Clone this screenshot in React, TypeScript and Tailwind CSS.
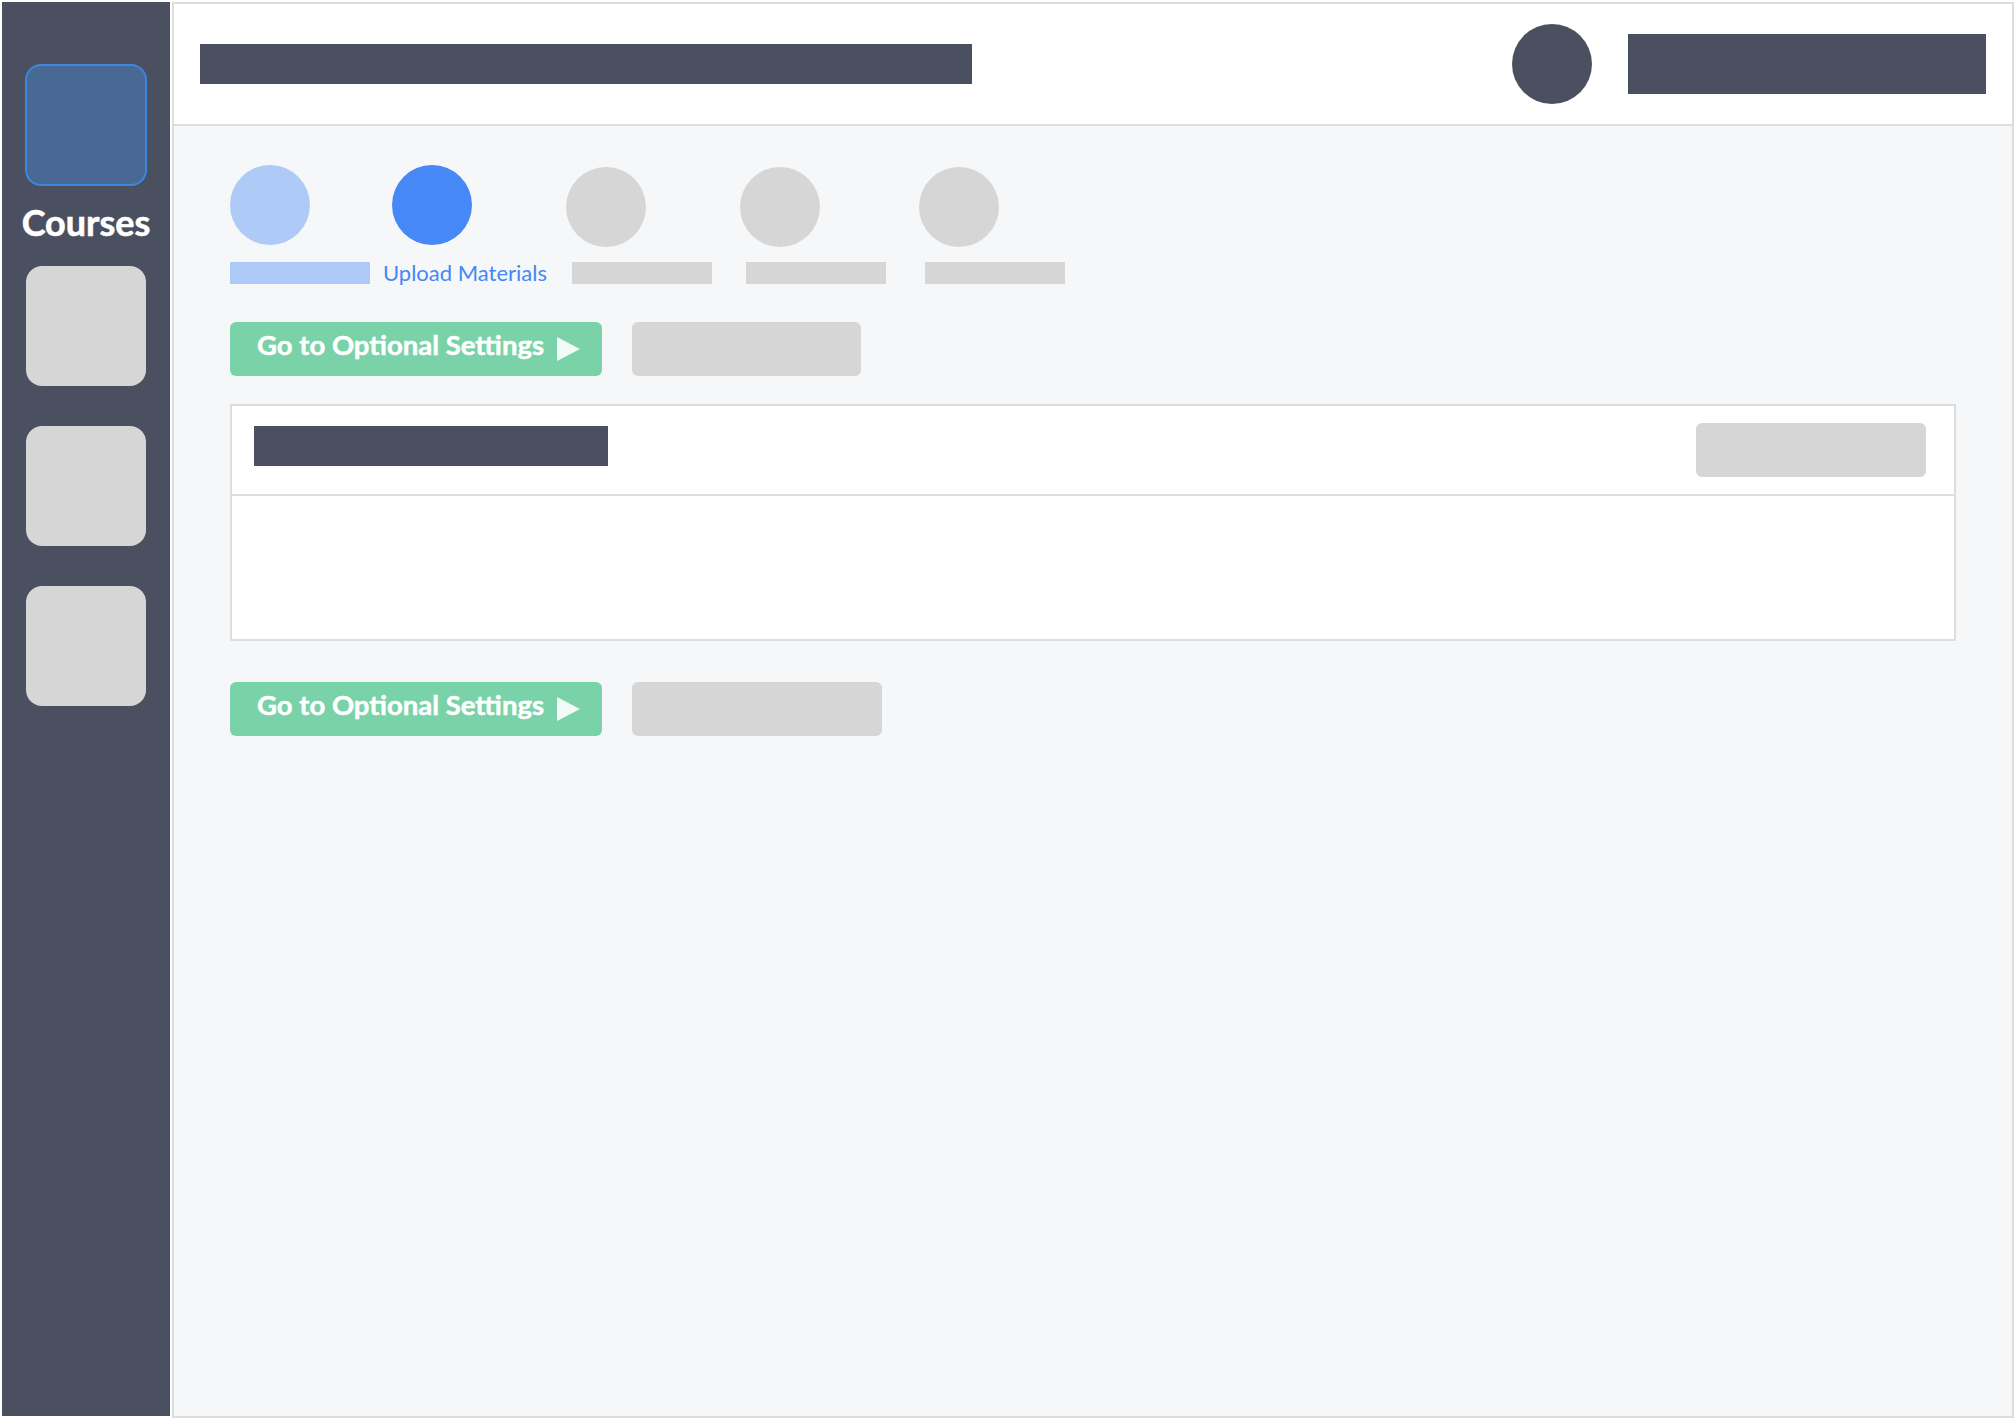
import React from 'react';

const steps = [
  { circle: 'bg-[#aecaf7]', label: 'bar-active', ml: 'ml-0' },
  { circle: 'bg-[#4588f6]', label: 'text', ml: 'ml-[13px]' },
  { circle: 'bg-[#d6d6d6]', label: 'bar', ml: 'ml-[19px]' },
  { circle: 'bg-[#d6d6d6]', label: 'bar', ml: 'ml-[28px]' },
  { circle: 'bg-[#d6d6d6]', label: 'bar', ml: 'ml-[33px]' },
];

function NextButton() {
  return (
    <button className="flex h-[54px] w-[372px] items-center rounded-[6px] bg-[#79d2a8] pb-2 pl-[27px] text-[27.5px] font-bold leading-[34px] text-white [-webkit-text-stroke:0.5px_#ffffff]">
      <span>Go to Optional Settings</span>
      <svg viewBox="0 0 24 24" className="ml-[12px] h-[24px] w-[24px] translate-y-[4px]">
        <path d="M1 0 L24 12 L1 24 Z" fill="#ffffff" fillOpacity="0.9" />
      </svg>
    </button>
  );
}

function Stepper() {
  return (
    <div className="flex items-start">
      {steps.map((step, i) => (
        <div key={i} className={`flex flex-col items-start ${step.ml}`}>
          {/* circle */}
          <div
            className={`h-[80px] w-[80px] rounded-full ${step.circle} ${
              step.label === 'text' ? 'ml-[9px]' : ''
            } ${step.label === 'bar' ? 'mt-[2px]' : ''}`}
          />
          {/* label */}
          {step.label === 'text' ? (
            <div className="mt-[17px] h-[22px] text-[22px] leading-[22px] text-[#4587f5]">Upload Materials</div>
          ) : (
            <div
              className={`h-[22px] w-[140px] ${
                step.label === 'bar-active' ? 'mt-[17px] bg-[#aecaf7]' : 'ml-[6px] mt-[15px] bg-[#d6d6d6]'
              }`}
            />
          )}
        </div>
      ))}
    </div>
  );
}

export default function App() {
  return (
    <div className="flex h-[1420px] w-full gap-[2px] bg-white p-[2px] font-[family-name:Lato,sans-serif]">
      {/* Sidebar */}
      <aside className="flex h-[1414px] w-[168px] shrink-0 flex-col items-center bg-[#4b5061] pt-[62px]">
        <div className="h-[122px] w-[122px] rounded-[16px] border-2 border-[#3f86e0] bg-[#486994]" />
        <div className="mt-[18px] text-[36px] font-bold leading-[36px] text-white [-webkit-text-stroke:0.6px_#ffffff]">
          Courses
        </div>
        <div className="mt-[26px] h-[120px] w-[120px] rounded-[16px] bg-[#d6d6d6]" />
        <div className="mt-[40px] h-[120px] w-[120px] rounded-[16px] bg-[#d6d6d6]" />
        <div className="mt-[40px] h-[120px] w-[120px] rounded-[16px] bg-[#d6d6d6]" />
      </aside>

      {/* Main */}
      <main className="flex flex-1 flex-col border-2 border-[#dddddd] bg-[#f6f7f9]">
        {/* Header */}
        <header className="flex h-[122px] shrink-0 items-center border-b-2 border-[#dddddd] bg-white px-[26px]">
          <div className="h-[40px] w-[772px] bg-[#4b5061]" />
          <div className="ml-auto h-[80px] w-[80px] rounded-full bg-[#4b5061]" />
          <div className="ml-[36px] h-[60px] w-[358px] bg-[#4b5061]" />
        </header>

        {/* Content */}
        <div className="flex flex-col px-[56px] pt-[39px]">
          <Stepper />

          <div className="mt-[38px] flex gap-[30px]">
            <NextButton />
            <div className="h-[54px] w-[229px] rounded-[6px] bg-[#d6d6d6]" />
          </div>

          {/* Card */}
          <section className="mt-[28px] border-2 border-[#dedede] bg-white">
            <div className="flex h-[90px] items-center border-b-2 border-[#dedede] pl-[22px] pr-[28px]">
              <div className="mb-2 h-[40px] w-[354px] bg-[#4b5061]" />
              <div className="ml-auto h-[54px] w-[230px] rounded-[6px] bg-[#d6d6d6]" />
            </div>
            <div className="h-[143px]" />
          </section>

          <div className="mt-[41px] flex gap-[30px]">
            <NextButton />
            <div className="h-[54px] w-[250px] rounded-[6px] bg-[#d6d6d6]" />
          </div>
        </div>
      </main>
    </div>
  );
}
